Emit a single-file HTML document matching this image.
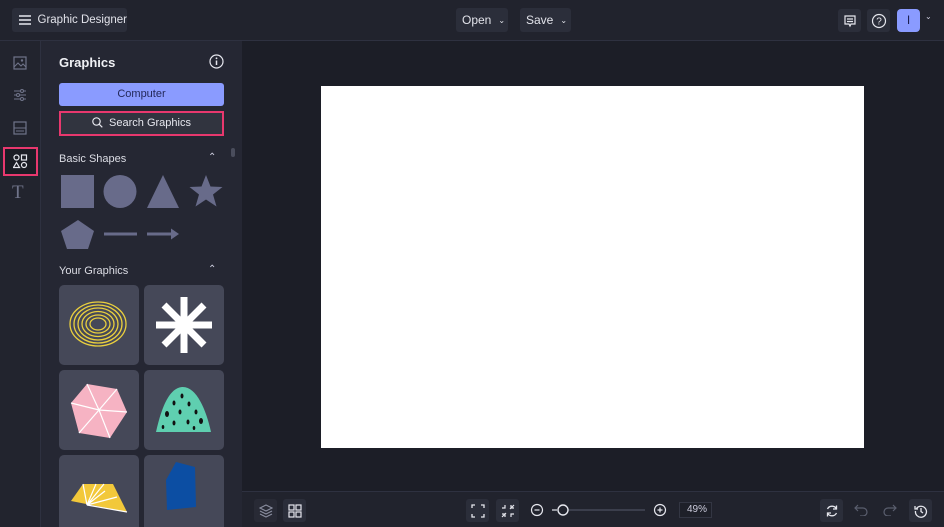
<!DOCTYPE html>
<html><head><meta charset="utf-8"><style>
*{box-sizing:border-box;margin:0;padding:0}
html,body{width:944px;height:527px;overflow:hidden}
body{background:#1c1e27;font-family:"Liberation Sans",sans-serif;color:#e6e7ee;position:relative}
.top{position:absolute;left:0;top:0;width:944px;height:41px;background:#21232d;border-bottom:1px solid #2e3140}
.btn{position:absolute;background:#2b2e3a;border-radius:3px;font-size:12px;color:#e2e3ea;display:flex;align-items:center;white-space:nowrap}
.rail{position:absolute;left:0;top:41px;width:41px;height:486px;background:#22242e;border-right:1px solid #2e3140}
.panel{position:absolute;left:41px;top:41px;width:201px;height:486px;background:#252733;overflow:hidden}
.ws{position:absolute;left:242px;top:41px;width:702px;height:450px;background:#1c1e27}
.bot{position:absolute;left:242px;top:491px;width:702px;height:36px;background:#21232d;border-top:1px solid #2e3140}
.ic{position:absolute;width:23px;height:23px;border-radius:3px;background:#2b2e3a;display:flex;align-items:center;justify-content:center}
.tile{position:absolute;width:80px;height:80px;border-radius:5px;background:#454858;overflow:hidden}
svg{display:block}
</style></head><body>
<div class="top">
 <div class="btn" style="left:12px;top:8px;width:115px;height:24px;padding-left:6px">
  <svg width="14" height="12"><path d="M1 2h12M1 6h12M1 10h12" stroke="#e6e7ee" stroke-width="1.4"/></svg>
  <span style="margin-left:7px;font-size:11.5px">Graphic Designer</span></div>
 <div class="btn" style="left:456px;top:8px;width:52px;height:24px;padding-left:6px">Open <span style="margin-left:7px;font-size:8px">&#8964;</span></div>
 <div class="btn" style="left:520px;top:8px;width:51px;height:24px;padding-left:6px">Save <span style="margin-left:7px;font-size:8px">&#8964;</span></div>
 <div class="ic" style="left:838px;top:9px"><svg width="14" height="14"><path d="M2 2h10v8H8l-1 2-1-2H2z M4 5h6M4 7.5h6" fill="none" stroke="#e6e7ee" stroke-width="1.2"/></svg></div>
 <div class="ic" style="left:867px;top:9px"><svg width="16" height="16"><circle cx="8" cy="8" r="6.5" fill="none" stroke="#e6e7ee" stroke-width="1.2"/><text x="8" y="11.5" font-size="10" text-anchor="middle" fill="#e6e7ee" font-family="Liberation Sans">?</text></svg></div>
 <div style="position:absolute;left:897px;top:9px;width:23px;height:23px;border-radius:4px;background:#8a9bff;color:#1d2050;font-size:12px;text-align:center;line-height:23px">I</div>
 <div style="position:absolute;left:925px;top:12px;font-size:8px;color:#ccd">&#8964;</div>
</div>
<div class="rail">
 <svg style="position:absolute;left:13px;top:15px" width="14" height="14"><rect x="1" y="1" width="12" height="12" fill="none" stroke="#70748a" stroke-width="1.2"/><path d="M1 11l4-4 3 3 2-2 3 3" fill="none" stroke="#70748a"/><circle cx="9" cy="4.5" r="1.2" fill="#70748a"/></svg>
 <svg style="position:absolute;left:13px;top:47px" width="14" height="14"><path d="M1 3h12M1 7h12M1 11h12" stroke="#70748a"/><circle cx="9" cy="3" r="1.5" fill="#22242e" stroke="#70748a"/><circle cx="5" cy="7" r="1.5" fill="#22242e" stroke="#70748a"/><circle cx="9" cy="11" r="1.5" fill="#22242e" stroke="#70748a"/></svg>
 <svg style="position:absolute;left:13px;top:80px" width="14" height="14"><rect x="1" y="1" width="12" height="12" fill="none" stroke="#70748a" stroke-width="1.2"/><path d="M1 7h12M3 10h8" stroke="#70748a"/></svg>
 <div style="position:absolute;left:3px;top:106px;width:35px;height:29px;border:2px solid #e8386e;background:#1b1d25"></div>
 <svg style="position:absolute;left:13px;top:113px" width="15" height="15"><circle cx="3.5" cy="3.5" r="2.5" fill="none" stroke="#e6e7ee" stroke-width="1.2"/><rect x="8.5" y="1" width="5" height="5" fill="none" stroke="#e6e7ee" stroke-width="1.2"/><path d="M3.5 8.5l3 5h-6z" fill="none" stroke="#e6e7ee" stroke-width="1.2"/><circle cx="11" cy="11" r="2.5" fill="none" stroke="#e6e7ee" stroke-width="1.2"/></svg>
 <div style="position:absolute;left:12px;top:141px;font-family:'Liberation Serif',serif;font-size:19px;color:#70748a">T</div>
</div>
<div class="panel">
 <div style="position:absolute;left:18px;top:14px;font-size:13px;font-weight:bold;color:#f0f1f5">Graphics</div>
 <svg style="position:absolute;left:168px;top:13px" width="15" height="15"><circle cx="7.5" cy="7.5" r="6.5" fill="none" stroke="#e6e7ee" stroke-width="1.2"/><path d="M7.5 6.5v4.5" stroke="#e6e7ee" stroke-width="1.5"/><circle cx="7.5" cy="4.3" r="0.9" fill="#e6e7ee"/></svg>
 <div style="position:absolute;left:18px;top:42px;width:165px;height:23px;border-radius:3px;background:#8a9bff;color:#23285a;font-size:11px;text-align:center;line-height:23px">Computer</div>
 <div style="position:absolute;left:18px;top:70px;width:165px;height:25px;border:2px solid #e8386e;background:#31343f;color:#e6e7ee;font-size:11px;text-align:center;line-height:21px"><svg style="display:inline-block;vertical-align:-2px;margin-right:6px" width="11" height="11"><circle cx="4.5" cy="4.5" r="3.7" fill="none" stroke="#e6e7ee" stroke-width="1.2"/><path d="M7.3 7.3l3 3" stroke="#e6e7ee" stroke-width="1.2"/></svg>Search Graphics</div>
 <div style="position:absolute;left:190px;top:107px;width:4px;height:9px;border-radius:2px;background:#4a4d5c"></div>
 <div style="position:absolute;left:18px;top:112px;font-size:11px;color:#dcdde5">Basic Shapes</div>
 <div style="position:absolute;left:167px;top:111px;font-size:10px;color:#ccd">&#8963;</div>
 <svg style="position:absolute;left:18px;top:133px" width="170" height="36">
  <rect x="2" y="1" width="33" height="33" fill="#686b8a"/>
  <circle cx="61" cy="17.5" r="16.5" fill="#686b8a"/>
  <path d="M104 1l16 33H88z" fill="#686b8a"/>
  <path d="M147 1l4.5 11.5 12 .5-9.5 7.5 3.5 12-10.5-7-10.5 7 3.5-12-9.5-7.5 12-.5z" fill="#686b8a"/>
 </svg>
 <svg style="position:absolute;left:18px;top:177px" width="130" height="34">
  <path d="M19 2l16 11-6 18H8L2 13z" fill="#686b8a"/>
  <rect x="45" y="14.5" width="33" height="3" fill="#686b8a"/>
  <path d="M88 14.5h24v-4l8 5.5-8 5.5v-4H88z" fill="#686b8a"/>
 </svg>
 <div style="position:absolute;left:18px;top:224px;font-size:11px;color:#dcdde5">Your Graphics</div>
 <div style="position:absolute;left:167px;top:223px;font-size:10px;color:#ccd">&#8963;</div>
 <div class="tile" style="left:18px;top:244px"><svg width="80" height="80"><g fill="none" stroke="#e9cf3e" stroke-width="1.3"><ellipse cx="39" cy="39" rx="28" ry="22"/><ellipse cx="39" cy="39" rx="24" ry="19"/><ellipse cx="39" cy="39" rx="20" ry="16"/><ellipse cx="39" cy="39" rx="16" ry="12.5"/><ellipse cx="39" cy="39" rx="12" ry="9"/><ellipse cx="39" cy="39" rx="8" ry="6"/></g></svg></div>
 <div class="tile" style="left:103px;top:244px"><svg width="80" height="80"><g stroke="#fff" stroke-width="7"><path d="M40 12v56M12 40h56M20 20l40 40M60 20L20 60"/></g></svg></div>
 <div class="tile" style="left:18px;top:329px"><svg width="80" height="80"><path d="M28 14l30 5 10 23-17 26-31-5-8-30z" fill="#f6b3c3"/><g stroke="#fff" stroke-width="1.2"><path d="M40 40L28 14M40 40l18-21M40 40l28 2M40 40l11 28M40 40L20 63M40 40L12 33"/></g></svg></div>
 <div class="tile" style="left:103px;top:329px"><svg width="80" height="80"><path d="M12 62C18 35 26 18 38 17c14-1 24 22 29 45z" fill="#5fcfb0"/><g fill="#111"><ellipse cx="38" cy="26" rx="1.5" ry="2.5"/><ellipse cx="30" cy="33" rx="1.5" ry="2.5"/><ellipse cx="45" cy="34" rx="1.5" ry="2.5"/><ellipse cx="23" cy="44" rx="2" ry="3"/><ellipse cx="36" cy="42" rx="1.5" ry="2.5"/><ellipse cx="52" cy="42" rx="1.5" ry="2.5"/><ellipse cx="30" cy="53" rx="1.5" ry="2.5"/><ellipse cx="44" cy="52" rx="1.5" ry="2.5"/><ellipse cx="57" cy="51" rx="2" ry="3"/><ellipse cx="19" cy="57" rx="1.3" ry="2"/><ellipse cx="50" cy="58" rx="1.3" ry="2"/></g></svg></div>
 <div class="tile" style="left:18px;top:414px"><svg width="80" height="80"><path d="M12 46l12-17h30l14 28z" fill="#f2c83a"/><g stroke="#fff" stroke-width="1.2"><path d="M28 50L24 29M28 50l9-21M28 50l17-21M28 50l18-14M28 50l30-8M28 50l40 7"/></g></svg></div>
 <div class="tile" style="left:103px;top:414px"><svg width="80" height="80"><path d="M32 7l19 5 1 40-29 3-1-30z" fill="#0c4ea3"/></svg></div>
</div>
<div class="ws"></div>
<div style="position:absolute;left:321px;top:86px;width:543px;height:362px;background:#fff"></div>
<div class="bot">
 <div class="ic" style="left:12px;top:7px;background:#282a35"><svg width="14" height="14"><path d="M7 1l6 3-6 3-6-3z M1 7l6 3 6-3 M1 10l6 3 6-3" fill="none" stroke="#8a8ea0" stroke-width="1.1"/></svg></div>
 <div class="ic" style="left:41px;top:7px"><svg width="14" height="14"><rect x="1" y="1" width="5" height="5" fill="none" stroke="#e6e7ee" stroke-width="1.2"/><rect x="8" y="1" width="5" height="5" fill="none" stroke="#e6e7ee" stroke-width="1.2"/><rect x="1" y="8" width="5" height="5" fill="none" stroke="#e6e7ee" stroke-width="1.2"/><rect x="8" y="8" width="5" height="5" fill="none" stroke="#e6e7ee" stroke-width="1.2"/></svg></div>
 <div class="ic" style="left:224px;top:7px"><svg width="14" height="14"><path d="M1 4V1h3M10 1h3v3M13 10v3h-3M4 13H1v-3" fill="none" stroke="#e6e7ee" stroke-width="1.3"/></svg></div>
 <div class="ic" style="left:254px;top:7px"><svg width="14" height="14"><path d="M4 1v3H1M10 1v3h3M13 10h-3v3M1 10h3v3M1 13l4-4M13 1L9 5" fill="none" stroke="#e6e7ee" stroke-width="1.2"/></svg></div>
 <svg style="position:absolute;left:288px;top:11px" width="120" height="14"><circle cx="7" cy="7" r="5.5" fill="none" stroke="#e6e7ee" stroke-width="1.2"/><path d="M4.5 7h5" stroke="#e6e7ee" stroke-width="1.2"/><path d="M22 7h5" stroke="#e6e7ee" stroke-width="1.2"/><path d="M38 7h77" stroke="#555a6b" stroke-width="1"/><circle cx="33" cy="7" r="5" fill="#21232d" stroke="#e6e7ee" stroke-width="1.4"/></svg>
 <svg style="position:absolute;left:411px;top:11px" width="14" height="14"><circle cx="7" cy="7" r="5.5" fill="none" stroke="#e6e7ee" stroke-width="1.2"/><path d="M4.5 7h5M7 4.5v5" stroke="#e6e7ee" stroke-width="1.2"/></svg>
 <div style="position:absolute;left:437px;top:10px;width:33px;height:16px;border:1px solid #333643;background:#1e2029;font-size:10px;color:#ccd;text-align:right;padding-right:4px;line-height:14px">49%</div>
 <div class="ic" style="left:578px;top:7px"><svg width="14" height="14"><path d="M11.5 5A5 5 0 0 0 2.5 5M2.5 9a5 5 0 0 0 9 0 M11.5 1.5V5H8 M2.5 12.5V9H6" fill="none" stroke="#e6e7ee" stroke-width="1.3"/></svg></div>
 <svg style="position:absolute;left:612px;top:12px" width="14" height="12"><path d="M4 1L1 4l3 3M1 4h8a4 4 0 0 1 0 8H6" fill="none" stroke="#5a5e6e" stroke-width="1.2"/></svg>
 <svg style="position:absolute;left:641px;top:12px" width="14" height="12"><path d="M10 1l3 3-3 3M13 4H5a4 4 0 0 0 0 8h3" fill="none" stroke="#5a5e6e" stroke-width="1.2"/></svg>
 <div class="ic" style="left:667px;top:7px"><svg width="14" height="14"><path d="M2.5 4.5A5.5 5.5 0 1 1 1.5 7 M1 2v3h3 M7 4v3.5l2 1.5" fill="none" stroke="#e6e7ee" stroke-width="1.3"/></svg></div>
</div>
</body></html>
